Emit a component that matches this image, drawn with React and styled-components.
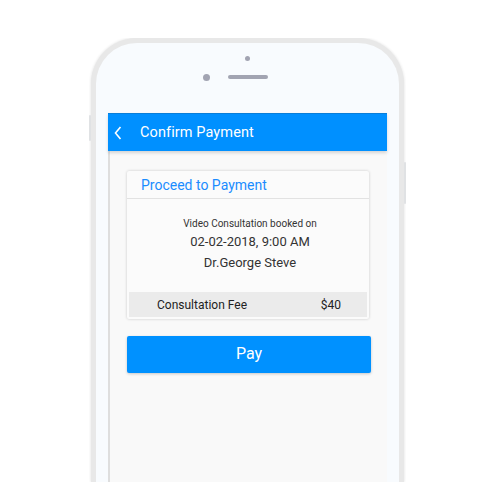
import React from "react";
import styled, { createGlobalStyle } from "styled-components";

const GlobalStyle = createGlobalStyle`
  html, body {
    margin: 0;
    padding: 0;
    background: #ffffff;
    font-family: Roboto, "Noto Sans", sans-serif;
  }
`;

const Stage = styled.div`
  width: 500px;
  height: 500px;
  overflow: hidden;
  background: #fff;
  padding-top: 38px;
  box-sizing: border-box;
`;

const PhoneClip = styled.div`
  margin-left: 89px;
  padding: 0 2px;
  width: 313px;
  height: 444px;
  position: relative;
  overflow: hidden;
`;

const Phone = styled.div`
  box-sizing: border-box;
  width: 313px;
  height: 444px;
  border: 5px solid #e8e8e8;
  border-bottom: none;
  border-radius: 46px 46px 0 0;
  background: #f8fbfe;
  box-shadow: 0 0 3px rgba(0, 0, 0, 0.14);
  display: flex;
  flex-direction: column;
  padding: 0 12px;
`;

const SideButton = styled.div`
  position: absolute;
  width: 2px;
  background: #e0e2e4;
  border-radius: 1px;
  top: ${p => p.$top}px;
  height: ${p => p.$height}px;
  ${p => (p.$right ? "right: 0;" : "left: 0;")}
`;

const Sensors = styled.div`
  height: 70px;
  position: relative;
  flex-shrink: 0;
`;

const Speaker = styled.div`
  position: absolute;
  left: ${228 - 108}px;
  top: ${77 - 43 - 2}px;
  width: 40px;
  height: 4px;
  border-radius: 2px;
  background: #a2a4b2;
`;

const Dot = styled.div`
  position: absolute;
  border-radius: 50%;
  background: #a2a4b2;
  width: ${p => p.$size}px;
  height: ${p => p.$size}px;
  left: ${p => p.$x - 108 - p.$size / 2}px;
  top: ${p => p.$y - 43 - p.$size / 2}px;
`;

const Screen = styled.div`
  flex: 1;
  background: #f9f9f9;
  border-left: 2px solid #dedede;
  display: flex;
  flex-direction: column;
`;

const Header = styled.div`
  height: 37px;
  background: #0090ff;
  border-top: 1px solid #0a7ed8;
  box-shadow: 0 2px 3px rgba(0, 0, 0, 0.15);
  display: flex;
  align-items: center;
  color: #fff;
  margin-left: -2px;
`;

const Back = styled.svg`
  width: 8px;
  height: 14px;
  margin: 0 18px 0 6px;
`;

const Title = styled.div`
  font-size: 14.5px;
  letter-spacing: 0.1px;
`;

const Body = styled.div`
  padding: 20px 16px 0 17px;
  display: flex;
  flex-direction: column;
`;

const Card = styled.div`
  width: 242px;
  background: #fbfbfb;
  border-radius: 2px;
  box-shadow: 0 0 3px rgba(0, 0, 0, 0.2);
  padding-bottom: 2px;
`;

const CardTitle = styled.div`
  height: 27px;
  border-bottom: 1px solid #e2e2e2;
  color: #1a8cff;
  font-size: 14px;
  display: flex;
  align-items: center;
  padding-left: 14px;
`;

const Details = styled.div`
  display: flex;
  flex-direction: column;
  align-items: center;
  padding: 18px 0 19px;
  color: #333;
`;

const Line = styled.div`
  font-size: ${p => p.$size}px;
  line-height: ${p => p.$lh}px;
  padding-left: 4px;
`;

const FeeRow = styled.div`
  margin: 0 2px;
  height: 25px;
  background: #ebebeb;
  display: flex;
  align-items: center;
  justify-content: space-between;
  padding: 0 26px 0 28px;
  font-size: 12px;
  color: #222;
`;

const PayButton = styled.button`
  margin-top: 17px;
  width: 244px;
  height: 37px;
  border: none;
  border-radius: 2px;
  background: #0091ff;
  box-shadow: 0 1px 3px rgba(0, 0, 0, 0.2);
  color: #fff;
  font-family: Roboto, "Noto Sans", sans-serif;
  font-size: 16px;
  padding: 0 0 2px;
`;

export default function App() {
  return (
    <Stage>
      <GlobalStyle />
      <PhoneClip>
        <SideButton $top={77} $height={26} />
        <SideButton $right $top={124} $height={42} />
        <Phone>
          <Sensors>
            <Dot $x={247} $y={58} $size={5} />
            <Dot $x={206} $y={77} $size={7} />
            <Speaker />
          </Sensors>
          <Screen>
            <Header>
              <Back viewBox="0 0 8 14">
                <path d="M6.5 1 L1.5 7 L6.5 13" fill="none" stroke="#fff" strokeWidth="1.6" />
              </Back>
              <Title>Confirm Payment</Title>
            </Header>
            <Body>
              <Card>
                <CardTitle>Proceed to Payment</CardTitle>
                <Details>
                  <Line $size={10} $lh={14}>Video Consultation booked on</Line>
                  <Line $size={13} $lh={22}>02-02-2018, 9:00 AM</Line>
                  <Line $size={13} $lh={20}>Dr.George Steve</Line>
                </Details>
                <FeeRow>
                  <span>Consultation Fee</span>
                  <span>$40</span>
                </FeeRow>
              </Card>
              <PayButton>Pay</PayButton>
            </Body>
          </Screen>
        </Phone>
      </PhoneClip>
    </Stage>
  );
}
